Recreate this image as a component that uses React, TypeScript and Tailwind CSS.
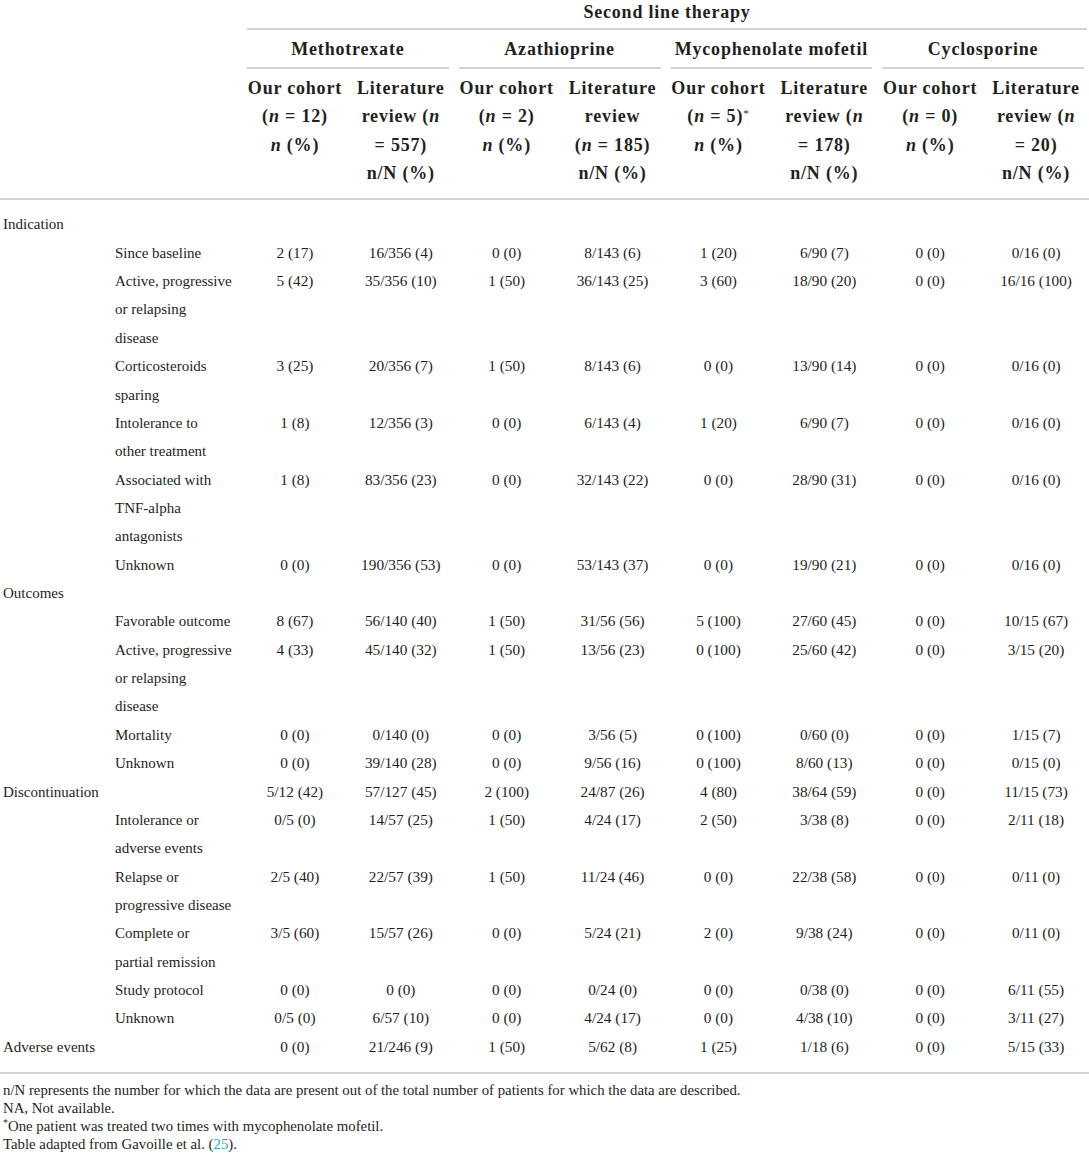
const serif = "font-['Liberation_Serif','Times_New_Roman',serif]";

const grid = 'grid grid-cols-[115px_127px_repeat(8,minmax(0,1fr))]';

type Row = {
  group?: string;
  label?: string[];
  values?: string[];
};

const rows: Row[] = [
  { group: 'Indication' },
  { label: ['Since baseline'], values: ['2 (17)', '16/356 (4)', '0 (0)', '8/143 (6)', '1 (20)', '6/90 (7)', '0 (0)', '0/16 (0)'] },
  { label: ['Active, progressive', 'or relapsing', 'disease'], values: ['5 (42)', '35/356 (10)', '1 (50)', '36/143 (25)', '3 (60)', '18/90 (20)', '0 (0)', '16/16 (100)'] },
  { label: ['Corticosteroids', 'sparing'], values: ['3 (25)', '20/356 (7)', '1 (50)', '8/143 (6)', '0 (0)', '13/90 (14)', '0 (0)', '0/16 (0)'] },
  { label: ['Intolerance to', 'other treatment'], values: ['1 (8)', '12/356 (3)', '0 (0)', '6/143 (4)', '1 (20)', '6/90 (7)', '0 (0)', '0/16 (0)'] },
  { label: ['Associated with', 'TNF-alpha', 'antagonists'], values: ['1 (8)', '83/356 (23)', '0 (0)', '32/143 (22)', '0 (0)', '28/90 (31)', '0 (0)', '0/16 (0)'] },
  { label: ['Unknown'], values: ['0 (0)', '190/356 (53)', '0 (0)', '53/143 (37)', '0 (0)', '19/90 (21)', '0 (0)', '0/16 (0)'] },
  { group: 'Outcomes' },
  { label: ['Favorable outcome'], values: ['8 (67)', '56/140 (40)', '1 (50)', '31/56 (56)', '5 (100)', '27/60 (45)', '0 (0)', '10/15 (67)'] },
  { label: ['Active, progressive', 'or relapsing', 'disease'], values: ['4 (33)', '45/140 (32)', '1 (50)', '13/56 (23)', '0 (100)', '25/60 (42)', '0 (0)', '3/15 (20)'] },
  { label: ['Mortality'], values: ['0 (0)', '0/140 (0)', '0 (0)', '3/56 (5)', '0 (100)', '0/60 (0)', '0 (0)', '1/15 (7)'] },
  { label: ['Unknown'], values: ['0 (0)', '39/140 (28)', '0 (0)', '9/56 (16)', '0 (100)', '8/60 (13)', '0 (0)', '0/15 (0)'] },
  { group: 'Discontinuation', values: ['5/12 (42)', '57/127 (45)', '2 (100)', '24/87 (26)', '4 (80)', '38/64 (59)', '0 (0)', '11/15 (73)'] },
  { label: ['Intolerance or', 'adverse events'], values: ['0/5 (0)', '14/57 (25)', '1 (50)', '4/24 (17)', '2 (50)', '3/38 (8)', '0 (0)', '2/11 (18)'] },
  { label: ['Relapse or', 'progressive disease'], values: ['2/5 (40)', '22/57 (39)', '1 (50)', '11/24 (46)', '0 (0)', '22/38 (58)', '0 (0)', '0/11 (0)'] },
  { label: ['Complete or', 'partial remission'], values: ['3/5 (60)', '15/57 (26)', '0 (0)', '5/24 (21)', '2 (0)', '9/38 (24)', '0 (0)', '0/11 (0)'] },
  { label: ['Study protocol'], values: ['0 (0)', '0 (0)', '0 (0)', '0/24 (0)', '0 (0)', '0/38 (0)', '0 (0)', '6/11 (55)'] },
  { label: ['Unknown'], values: ['0/5 (0)', '6/57 (10)', '0 (0)', '4/24 (17)', '0 (0)', '4/38 (10)', '0 (0)', '3/11 (27)'] },
  { group: 'Adverse events', values: ['0 (0)', '21/246 (9)', '1 (50)', '5/62 (8)', '1 (25)', '1/18 (6)', '0 (0)', '5/15 (33)'] },
];

const drugs = ['Methotrexate', 'Azathioprine', 'Mycophenolate mofetil', 'Cyclosporine'];

const Rule = () => <div className="h-[2px] bg-[#d3d3d3]" />;

const OurCohort = ({ n, star }: { n: string; star?: boolean }) => (
  <div className="flex flex-col items-center">
    <span>Our cohort</span>
    <span>
      (<i>n</i> = {n}){star && <sup className="text-[11px] font-normal">*</sup>}
    </span>
    <span>
      <i>n</i> (%)
    </span>
  </div>
);

const Literature = ({ lines }: { lines: React.ReactNode[] }) => (
  <div className="flex flex-col items-center">
    <span>Literature</span>
    {lines.map((l, i) => (
      <span key={i}>{l}</span>
    ))}
    <span>n/N (%)</span>
  </div>
);

const TableHeader = () => (
  <div className={`${grid} font-bold text-[18px] tracking-[0.8px] text-[#231f20]`}>
    <div className="col-start-3 col-span-8 pl-[5px] pr-[2px]">
      <div className="text-center leading-[24px] pb-[4px]">Second line therapy</div>
      <Rule />
    </div>

    {drugs.map((d, i) => (
      <div key={d} className={`${i === 0 ? 'col-start-3' : ''} col-span-2 px-[5px]`}>
        <div className="text-center leading-[28px] pt-[5px] pb-[4px] whitespace-nowrap">{d}</div>
        <Rule />
      </div>
    ))}

    <div className="col-start-3 col-span-8 grid grid-cols-8 leading-[28.35px] pt-[5px] pb-[11px] whitespace-nowrap">
      <OurCohort n="12" />
      <Literature lines={[<>review (<i>n</i></>, '= 557)']} />
      <OurCohort n="2" />
      <Literature lines={['review', <>(<i>n</i> = 185)</>]} />
      <OurCohort n="5" star />
      <Literature lines={[<>review (<i>n</i></>, '= 178)']} />
      <OurCohort n="0" />
      <Literature lines={[<>review (<i>n</i></>, '= 20)']} />
    </div>
  </div>
);

const TableBody = () => (
  <div className="pt-[10px] pb-[10.5px] text-[15px] leading-[28.36px] text-[#231f20]">
    {rows.map((r, i) => (
      <div key={i} className={grid}>
        <div className="pl-[3px] whitespace-nowrap">{r.group}</div>
        <div className="flex flex-col whitespace-nowrap">
          {r.label?.map((l) => (
            <span key={l}>{l}</span>
          ))}
        </div>
        {r.values
          ? r.values.map((v, j) => (
              <div key={j} className="text-center text-[15.3px] whitespace-nowrap">
                {v}
              </div>
            ))
          : null}
      </div>
    ))}
  </div>
);

export default function App() {
  return (
    <div className={`w-[1089px] bg-white ${serif}`}>
      <TableHeader />
      <Rule />
      <TableBody />
      <Rule />
      <div className="pt-[7px] pl-[3px] text-[14.8px] leading-[18px] text-[#231f20]">
        <p>
          n/N represents the number for which the data are present out of the total number of patients for which the
          data are described.
        </p>
        <p>NA, Not available.</p>
        <p>
          <sup className="text-[10px]">*</sup>One patient was treated two times with mycophenolate mofetil.
        </p>
        <p>
          Table adapted from Gavoille et al. (<span className="text-[#1aa5c8]">25</span>).
        </p>
      </div>
    </div>
  );
}
